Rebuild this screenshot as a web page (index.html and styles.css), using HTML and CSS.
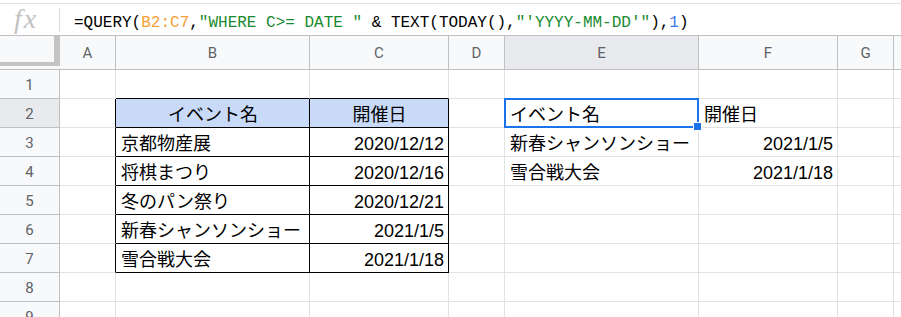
FILE: index.html
```html
<!DOCTYPE html>
<html lang="ja">
<head>
  <meta charset="UTF-8" />
  <title>QUERY - スプレッドシート</title>
  <link rel="stylesheet" href="styles.css">
</head>
<body>

  <div class="formula-bar">
    <div class="fx">fx</div>
    <div class="sep"></div>
    <div class="formula">=QUERY(<span class="ref">B2:C7</span>,<span class="str">"WHERE C&gt;= DATE "</span> &amp; TEXT(TODAY(),<span class="str">"'YYYY-MM-DD'"</span>),<span class="num">1</span>)</div>
  </div>

  <div class="sheet">
    <div class="corner"><div class="corner-bar"></div></div>
    <div class="colh">A</div>
    <div class="colh">B</div>
    <div class="colh">C</div>
    <div class="colh">D</div>
    <div class="colh sel">E</div>
    <div class="colh">F</div>
    <div class="colh">G</div>
    <div class="colh"></div>

    <div class="rowh">1</div>
    <div class="c"></div>
    <div class="c bb"></div>
    <div class="c bb"></div>
    <div class="c"></div>
    <div class="c"></div>
    <div class="c"></div>
    <div class="c"></div>
    <div class="c"></div>

    <div class="rowh sel">2</div>
    <div class="c br"></div>
    <div class="c tb hd">イベント名</div>
    <div class="c tb hd">開催日</div>
    <div class="c"></div>
    <div class="c active">イベント名<div class="sel-box"></div><div class="sel-handle"></div></div>
    <div class="c">開催日</div>
    <div class="c"></div>
    <div class="c"></div>

    <div class="rowh">3</div>
    <div class="c br"></div>
    <div class="c tb">京都物産展</div>
    <div class="c tb r">2020/12/12</div>
    <div class="c"></div>
    <div class="c">新春シャンソンショー</div>
    <div class="c r">2021/1/5</div>
    <div class="c"></div>
    <div class="c"></div>

    <div class="rowh">4</div>
    <div class="c br"></div>
    <div class="c tb">将棋まつり</div>
    <div class="c tb r">2020/12/16</div>
    <div class="c"></div>
    <div class="c">雪合戦大会</div>
    <div class="c r">2021/1/18</div>
    <div class="c"></div>
    <div class="c"></div>

    <div class="rowh">5</div>
    <div class="c br"></div>
    <div class="c tb">冬のパン祭り</div>
    <div class="c tb r">2020/12/21</div>
    <div class="c"></div>
    <div class="c"></div>
    <div class="c"></div>
    <div class="c"></div>
    <div class="c"></div>

    <div class="rowh">6</div>
    <div class="c br"></div>
    <div class="c tb">新春シャンソンショー</div>
    <div class="c tb r">2021/1/5</div>
    <div class="c"></div>
    <div class="c"></div>
    <div class="c"></div>
    <div class="c"></div>
    <div class="c"></div>

    <div class="rowh">7</div>
    <div class="c br"></div>
    <div class="c tb">雪合戦大会</div>
    <div class="c tb r">2021/1/18</div>
    <div class="c"></div>
    <div class="c"></div>
    <div class="c"></div>
    <div class="c"></div>
    <div class="c"></div>

    <div class="rowh">8</div>
    <div class="c"></div>
    <div class="c"></div>
    <div class="c"></div>
    <div class="c"></div>
    <div class="c"></div>
    <div class="c"></div>
    <div class="c"></div>
    <div class="c"></div>

    <div class="rowh">9</div>
    <div class="c"></div>
    <div class="c"></div>
    <div class="c"></div>
    <div class="c"></div>
    <div class="c"></div>
    <div class="c"></div>
    <div class="c"></div>
    <div class="c"></div>
  </div>

</body>
</html>
```

FILE: styles.css
```css
* {
  box-sizing: border-box;
}

body {
  margin: 0;
  background: #fff;
  color: #000;
  font-family: "Liberation Sans", "Noto Sans CJK JP", sans-serif;
  overflow: hidden;
}

/* formula bar */
.formula-bar {
  display: flex;
  align-items: flex-start;
  height: 33px;
  margin-top: 3px;
  border-top: 1px solid #e0e0e0;
  border-bottom: 1px solid #c0c0c0;
}

.fx {
  width: 59px;
  padding: 0 0 0 14px;
  font: italic 28px/29px "Liberation Serif", serif;
  letter-spacing: 2px;
  color: #c2c2c2;
}

.sep {
  width: 1px;
  height: 24px;
  margin-top: 4px;
  background: #dadce0;
}

.formula {
  padding: 9px 0 0 14px;
  font: 16px/20px "Liberation Mono", monospace;
  white-space: pre;
  color: #000;
}

.formula .ref { color: #f4a13a; }
.formula .str { color: #188a2f; }
.formula .num { color: #3b78e7; }

/* grid */
.sheet {
  display: grid;
  grid-template-columns: 60px 56px 194px 139px 56px 194px 139px 56px 1fr;
  grid-template-rows: 34px;
  grid-auto-rows: 29px;
}

.corner {
  background: #f8f9fa;
  border-bottom: 1px solid #c0c0c0;
}

.corner-bar {
  height: 30px;
  border-right: 6px solid #c4c4c4;
  border-bottom: 4px solid #c4c4c4;
}

.colh, .rowh {
  display: flex;
  align-items: center;
  justify-content: center;
  background: #f8f9fa;
  border-right: 1px solid #c0c0c0;
  border-bottom: 1px solid #c0c0c0;
  font: 15px Roboto, sans-serif;
  color: #5f6368;
}

.rowh {
  padding-top: 2px;
}

.colh.sel, .rowh.sel {
  background: #e8eaed;
}

.c {
  display: flex;
  align-items: flex-end;
  padding: 0 4px 2px 5px;
  border-right: 1px solid #e2e2e2;
  border-bottom: 1px solid #e2e2e2;
  font-size: 18px;
  line-height: 20px;
  white-space: nowrap;
}

.c.r { justify-content: flex-end; }

.c.hd {
  justify-content: center;
  background: #c9daf8;
}

.br { border-right-color: #000; }
.bb { border-bottom-color: #000; }
.tb {
  border-right-color: #000;
  border-bottom-color: #000;
}

/* active cell */
.active {
  position: relative;
}

.sel-box {
  position: absolute;
  left: -1px;
  top: -1px;
  width: 195px;
  height: 30px;
  border: 2px solid #1a73e8;
  z-index: 1;
}

.sel-handle {
  position: absolute;
  left: 188px;
  top: 23px;
  width: 9px;
  height: 9px;
  background: #1a73e8;
  border: 1px solid #fff;
  z-index: 2;
}
```
